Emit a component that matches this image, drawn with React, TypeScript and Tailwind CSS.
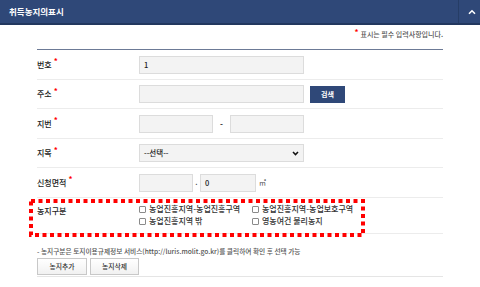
import React from "react";

const font = "font-['Noto_Sans_CJK_KR','Noto_Sans',sans-serif]";

function Req() {
  return <span className="ml-[2px] -mt-[7px] text-[8px] leading-none font-bold text-[#ff0000]">*</span>;
}

function Label({ text, required = true }: { text: string; required?: boolean }) {
  return (
    <div className="flex w-[102px] shrink-0 items-center text-[8px] font-medium leading-[10px] text-[#222]">
      <span>{text}</span>
      {required ? <Req /> : null}
    </div>
  );
}

function Field({ className, value }: { className: string; value?: string }) {
  return (
    <div
      className={`flex h-[18px] items-center border border-[#dcdcdc] bg-[#f3f3f3] pl-[4px] text-[7.5px] font-medium text-[#222] ${className}`}
    >
      {value}
    </div>
  );
}

function Check({ label }: { label: string }) {
  return (
    <div className="flex h-[12px] items-center gap-[3px] text-[8px] font-medium text-[#333]">
      <span className="h-[7px] w-[7px] rounded-[1px] border border-[#8a8a8a] bg-white" />
      <span>{label}</span>
    </div>
  );
}

export default function App() {
  return (
    <div className={`relative h-[287px] w-[480px] overflow-hidden bg-white ${font}`}>
      <div className="flex h-[25px] items-center border-b-2 border-[#22375e] bg-[#2f4878]">
        <div className="flex-1 pl-[9px] text-[8.5px] font-bold text-white">취득농지의표시</div>
        <div className="flex h-full w-[22px] items-center justify-center border-l border-[#263d66] pl-[5px]">
          <svg width="8" height="6" viewBox="0 0 8 6" fill="none">
            <path d="M1 4.8 4 1.8 7 4.8" stroke="#ffffff" strokeWidth="1.6" />
          </svg>
        </div>
      </div>

      <div className="ml-[37px] w-[406px]">
        <div className="flex h-[24px] items-start justify-end pt-[4px] text-[7px] font-medium leading-[10px] text-[#555]">
          <span className="mr-[2px] -mt-[2px] text-[8px] font-bold text-[#ff0000]">*</span>
          <span>표시는 필수 입력사항입니다.</span>
        </div>

        <div className="border-t border-[#6c7a96]">
          <div className="flex h-[30px] items-center border-b border-[#ececec]">
            <Label text="번호" />
            <Field className="w-[165px]" value="1" />
          </div>
          <div className="flex h-[29px] items-center border-b border-[#ececec]">
            <Label text="주소" />
            <Field className="w-[165px]" />
            <button
              type="button"
              className="ml-[6px] h-[17px] w-[35px] bg-[#2f4878] text-[7px] font-bold text-white"
            >
              검색
            </button>
          </div>
          <div className="flex h-[30px] items-center border-b border-[#ececec]">
            <Label text="지번" />
            <Field className="w-[74px]" />
            <span className="w-[17px] text-center text-[8px] font-bold text-[#333]">-</span>
            <Field className="w-[74px]" />
          </div>
          <div className="flex h-[29px] items-center border-b border-[#ececec]">
            <Label text="지목" />
            <div className="flex h-[18px] w-[165px] items-center justify-between border border-[#dcdcdc] bg-[#f3f3f3] pl-[4px] pr-[4px] text-[7.5px] font-medium text-[#222]">
              <span>--선택--</span>
              <svg width="7" height="5" viewBox="0 0 7 5" fill="none">
                <path d="M1 1 3.5 3.6 6 1" stroke="#111" strokeWidth="1.5" />
              </svg>
            </div>
          </div>
          <div className="flex h-[30px] items-center border-b border-[#ececec]">
            <Label text="신청면적" />
            <Field className="w-[54px]" />
            <span className="w-[7px] text-center text-[7px] font-bold leading-none text-[#333]">.</span>
            <Field className="w-[56px]" value="0" />
            <span className="ml-[3px] text-[7px] text-[#444]">㎡</span>
          </div>
          <div className="flex h-[36px] items-start border-b border-[#ececec]">
            <div className="w-[102px] shrink-0 pt-[8px] text-[8px] font-medium leading-[10px] text-[#222]">
              농지구분
            </div>
            <div className="grid grid-cols-[113px_1fr] pt-[5px]">
              <Check label="농업진흥지역-농업진흥구역" />
              <Check label="농업진흥지역-농업보호구역" />
              <Check label="농업진흥지역 밖" />
              <Check label="영농여건 불리농지" />
            </div>
          </div>
        </div>

        <p className="mt-[12px] text-[6.7px] font-medium leading-[10px] text-[#555]">
          - 농지구분은 토지이용규제정보 서비스(http://luris.molit.go.kr)를 클릭하여 확인 후 선택 가능
        </p>
        <div className="mt-[2px] flex gap-[3px] border-b border-[#e5e5e5] pb-[1px]">
          <button
            type="button"
            className="h-[17px] w-[50px] border border-[#c8c8c8] bg-gradient-to-b from-white to-[#f1f1f1] text-[6.8px] font-medium text-[#333]"
          >
            농지추가
          </button>
          <button
            type="button"
            className="h-[17px] w-[49px] border border-[#c8c8c8] bg-gradient-to-b from-white to-[#f1f1f1] text-[6.8px] font-medium text-[#333]"
          >
            농지삭제
          </button>
        </div>
      </div>

      <svg
        className="pointer-events-none absolute left-[29px] top-[199px]"
        width="336"
        height="38"
        viewBox="0 0 336 38"
        fill="none"
      >
        <rect x="2" y="2" width="332" height="34" stroke="#ff0000" strokeWidth="4" strokeDasharray="4 3.5" />
      </svg>
    </div>
  );
}
